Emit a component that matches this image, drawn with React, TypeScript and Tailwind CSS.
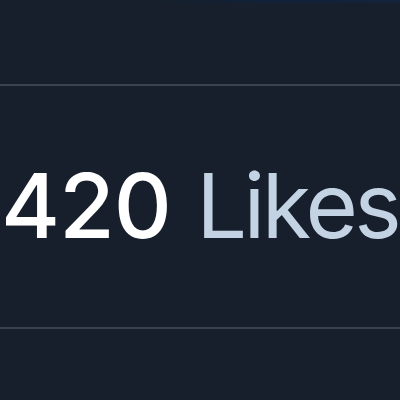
export default function App() {
  return (
    <div className="relative h-[400px] w-[400px] overflow-hidden bg-[#161f2b]" style={{ fontFamily: 'Inter, "Liberation Sans", Arial, sans-serif' }}>
      {/* faint top edge of the previous block */}
      <div className="absolute right-0 top-0 h-[3px] w-[250px] bg-gradient-to-r from-[#161f2b] via-[#112139] to-[#13233a]" />
      <div className="h-[84px]" />
      <div className="h-[245px] border-y-2 border-[#3a4451] pl-[1px] pt-[75px]">
        <p className="whitespace-nowrap text-[90px] leading-none">
          <span className="font-medium tracking-[-0.01em] text-white">420</span>{" "}
          <span className="tracking-[-0.04em] text-[#c3d3e4]">Likes</span>
        </p>
      </div>
    </div>
  );
}
